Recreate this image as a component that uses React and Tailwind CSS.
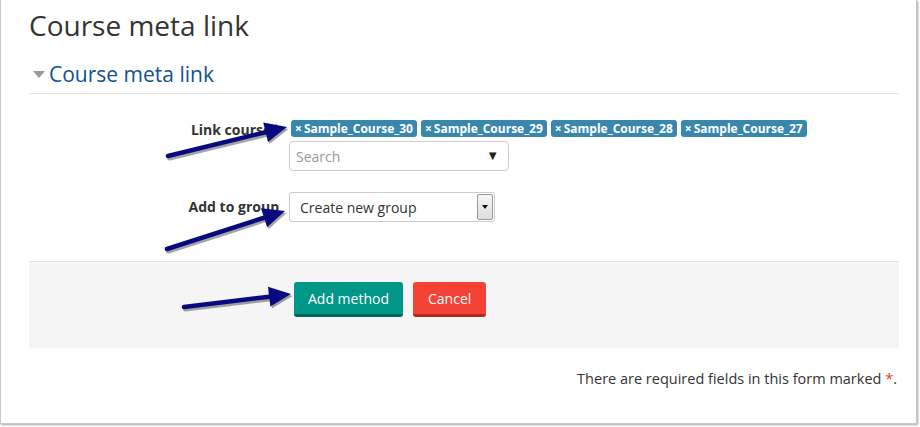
import React from 'react';

const courses = ['Sample_Course_30', 'Sample_Course_29', 'Sample_Course_28', 'Sample_Course_27'];

const Arrow = ({ x1, y1, x2, y2 }) => {
  const dx = x2 - x1;
  const dy = y2 - y1;
  const len = Math.sqrt(dx * dx + dy * dy);
  const ux = dx / len;
  const uy = dy / len;
  const head = 22;
  const half = 10;
  const bx = x2 - ux * head;
  const by = y2 - uy * head;
  const p1 = `${bx - uy * half},${by + ux * half}`;
  const p2 = `${bx + uy * half},${by - ux * half}`;
  return (
    <g>
      <g transform="translate(1.5,2)" opacity="0.35">
        <line x1={x1} y1={y1} x2={bx} y2={by} stroke="#000" strokeWidth="5" strokeLinecap="round" />
        <polygon points={`${x2},${y2} ${p1} ${p2}`} fill="#000" />
      </g>
      <line x1={x1} y1={y1} x2={bx} y2={by} stroke="#0a0a80" strokeWidth="4.5" strokeLinecap="round" />
      <polygon points={`${x2},${y2} ${p1} ${p2}`} fill="#0a0a80" />
    </g>
  );
};

export default function App() {
  return (
    <div className="relative w-[920px] h-[427px] bg-white" style={{ fontFamily: '"Open Sans", "Liberation Sans", sans-serif' }}>
      <div className="w-[917px] h-[424px] border-l border-b border-r border-[#c8c8c8] shadow-[1px_1px_2px_rgba(0,0,0,0.35)] pl-[28px] pr-[17px] text-[#333]">
        <h1 className="text-[28px] leading-[34px] pt-[8px] text-[#333]">Course meta link</h1>

        <div className="mt-[18px] flex items-center pb-[5px] border-b border-[#e0e0e0]">
          <span className="ml-[4px] mr-[4px] w-0 h-0 border-l-[6px] border-r-[6px] border-t-[7px] border-l-transparent border-r-transparent border-t-[#999]" />
          <span className="text-[21px] leading-[28px] text-[#0f5290]">Course meta link</span>
        </div>

        <div className="mt-[26px] flex">
          <div className="w-[260px] pr-[9px] pt-[1px] flex justify-end text-[14px] font-bold leading-[18px]">
            Link course<span className="text-[#e33] font-normal ml-[1px]">*</span>
          </div>
          <div className="flex flex-col">
            <div className="flex gap-[4px] ml-[2px]">
              {courses.map((c) => (
                <span key={c} className="bg-[#3a87ad] text-white text-[12px] font-bold leading-[17px] px-[4px] rounded-[3px]">
                  <span className="mr-[2px]">×</span>{c}
                </span>
              ))}
            </div>
            <div className="mt-[4px] w-[220px] h-[30px] border border-[#ccc] rounded-[4px] flex items-center justify-between pl-[6px] pr-[9px]">
              <span className="text-[14px] text-[#999]">Search</span>
              <span className="text-[13px] text-[#222]">▼</span>
            </div>
          </div>
        </div>

        <div className="mt-[21px] flex">
          <div className="w-[260px] pr-[10px] pt-[6px] flex justify-end text-[14px] font-bold leading-[18px]">
            Add to group
          </div>
          <div className="w-[206px] h-[30px] border border-[#ccc] rounded-[3px] flex items-center justify-between pl-[10px] pr-[1px]">
            <span className="text-[14px] text-[#333]">Create new group</span>
            <span className="w-[16px] h-[26px] border border-[#999] rounded-[2px] bg-gradient-to-b from-[#f6f6f6] to-[#dcdcdc] flex items-center justify-center">
              <span className="w-0 h-0 border-l-[3px] border-r-[3px] border-t-[4px] border-l-transparent border-r-transparent border-t-[#111]" />
            </span>
          </div>
        </div>

        <div className="mt-[39px] h-[87px] bg-[#f5f5f5] border-t border-[#e3e3e3] flex items-start pt-[20px] pl-[265px] gap-[10px]">
          <button className="h-[35px] px-[14px] bg-[#009688] border-b-[3px] border-[#00695c] rounded-[3px] text-white text-[14px]">Add method</button>
          <button className="h-[35px] px-[15px] bg-[#f44336] border-b-[3px] border-[#b12a21] rounded-[3px] text-white text-[14px]">Cancel</button>
        </div>

        <div className="mt-[20px] text-right text-[14.5px] pr-[2px]">
          There are required fields in this form marked <span className="text-[#e33]">*</span>.
        </div>
      </div>

      <svg className="absolute left-0 top-0 pointer-events-none" width="920" height="427">
        <Arrow x1={168} y1={156} x2={287} y2={127} />
        <Arrow x1={167} y1={249} x2={285} y2={211} />
        <Arrow x1={184} y1={307} x2={291} y2={294} />
      </svg>
    </div>
  );
}
